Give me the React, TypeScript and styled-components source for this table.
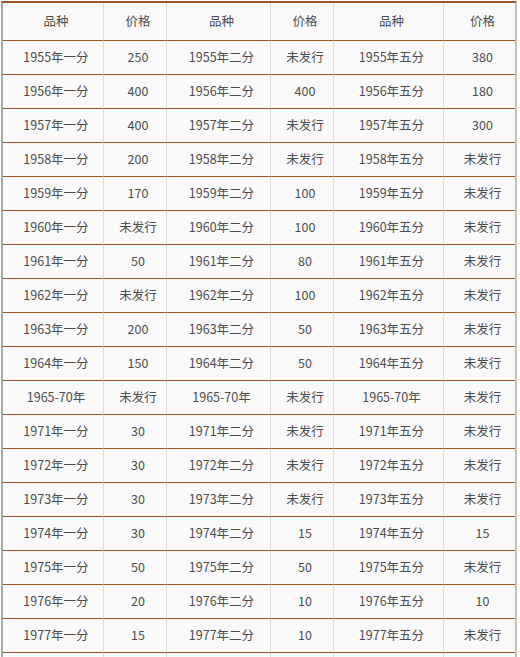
import React from 'react';
import styled, { createGlobalStyle } from 'styled-components';

const GlobalStyle = createGlobalStyle`
  html, body {
    margin: 0;
    padding: 0;
    background: #ffffff;
  }
  body {
    font-family: "Noto Sans CJK SC", "Noto Sans", sans-serif;
  }
`;

type Row = [string, string, string, string, string, string];

const rows: Row[] = [
  ['1955年一分', '250', '1955年二分', '未发行', '1955年五分', '380'],
  ['1956年一分', '400', '1956年二分', '400', '1956年五分', '180'],
  ['1957年一分', '400', '1957年二分', '未发行', '1957年五分', '300'],
  ['1958年一分', '200', '1958年二分', '未发行', '1958年五分', '未发行'],
  ['1959年一分', '170', '1959年二分', '100', '1959年五分', '未发行'],
  ['1960年一分', '未发行', '1960年二分', '100', '1960年五分', '未发行'],
  ['1961年一分', '50', '1961年二分', '80', '1961年五分', '未发行'],
  ['1962年一分', '未发行', '1962年二分', '100', '1962年五分', '未发行'],
  ['1963年一分', '200', '1963年二分', '50', '1963年五分', '未发行'],
  ['1964年一分', '150', '1964年二分', '50', '1964年五分', '未发行'],
  ['1965-70年', '未发行', '1965-70年', '未发行', '1965-70年', '未发行'],
  ['1971年一分', '30', '1971年二分', '未发行', '1971年五分', '未发行'],
  ['1972年一分', '30', '1972年二分', '未发行', '1972年五分', '未发行'],
  ['1973年一分', '30', '1973年二分', '未发行', '1973年五分', '未发行'],
  ['1974年一分', '30', '1974年二分', '15', '1974年五分', '15'],
  ['1975年一分', '50', '1975年二分', '50', '1975年五分', '未发行'],
  ['1976年一分', '20', '1976年二分', '10', '1976年五分', '10'],
  ['1977年一分', '15', '1977年二分', '10', '1977年五分', '未发行'],
  ['', '', '', '', '', ''],
];

const widths = [101, 63, 104, 63, 110, 71];
const heads = ['品种', '价格', '品种', '价格', '品种', '价格'];

const App: React.FC = () => {
  return (
    <Page>
      <GlobalStyle />
      <Table>
        <thead>
          <tr>
            {heads.map((h, i) => (
              <HeadCell key={i} $w={widths[i]}>
                {h}
              </HeadCell>
            ))}
          </tr>
        </thead>
        <tbody>
          {rows.map((r, ri) => (
            <tr key={ri}>
              {r.map((c, ci) => (
                <Cell key={ci}>{c}</Cell>
              ))}
            </tr>
          ))}
        </tbody>
      </Table>
    </Page>
  );
};

export default App;

const Page = styled.div`
  padding: 1px 0 0 1px;
  height: 656px;
  overflow: hidden;
`;

const Table = styled.table`
  border-collapse: separate;
  border-spacing: 0;
  table-layout: fixed;
  width: 516px;
  border-top: 2px solid #9a5428;
  border-left: 2px solid #a8a8a8;
  border-right: 2px solid #c9c0b8;
  background: #f9f9f9;
  color: #4d4d4d;
  font-size: 12.5px;
`;

const HeadCell = styled.th<{ $w: number }>`
  box-sizing: border-box;
  width: ${(p) => p.$w}px;
  height: 38px;
  padding: 0 0 2px 6px;
  font-weight: normal;
  text-align: center;
  border-bottom: 1px solid #9a5428;
  border-right: 1px solid #dcdcdc;
  &:last-child {
    border-right: none;
  }
`;

const Cell = styled.td`
  box-sizing: border-box;
  height: 34px;
  padding: 0 0 3px 6px;
  text-align: center;
  white-space: nowrap;
  border-bottom: 1px solid #9a5428;
  border-right: 1px solid #dcdcdc;
  &:last-child {
    border-right: none;
  }
`;
